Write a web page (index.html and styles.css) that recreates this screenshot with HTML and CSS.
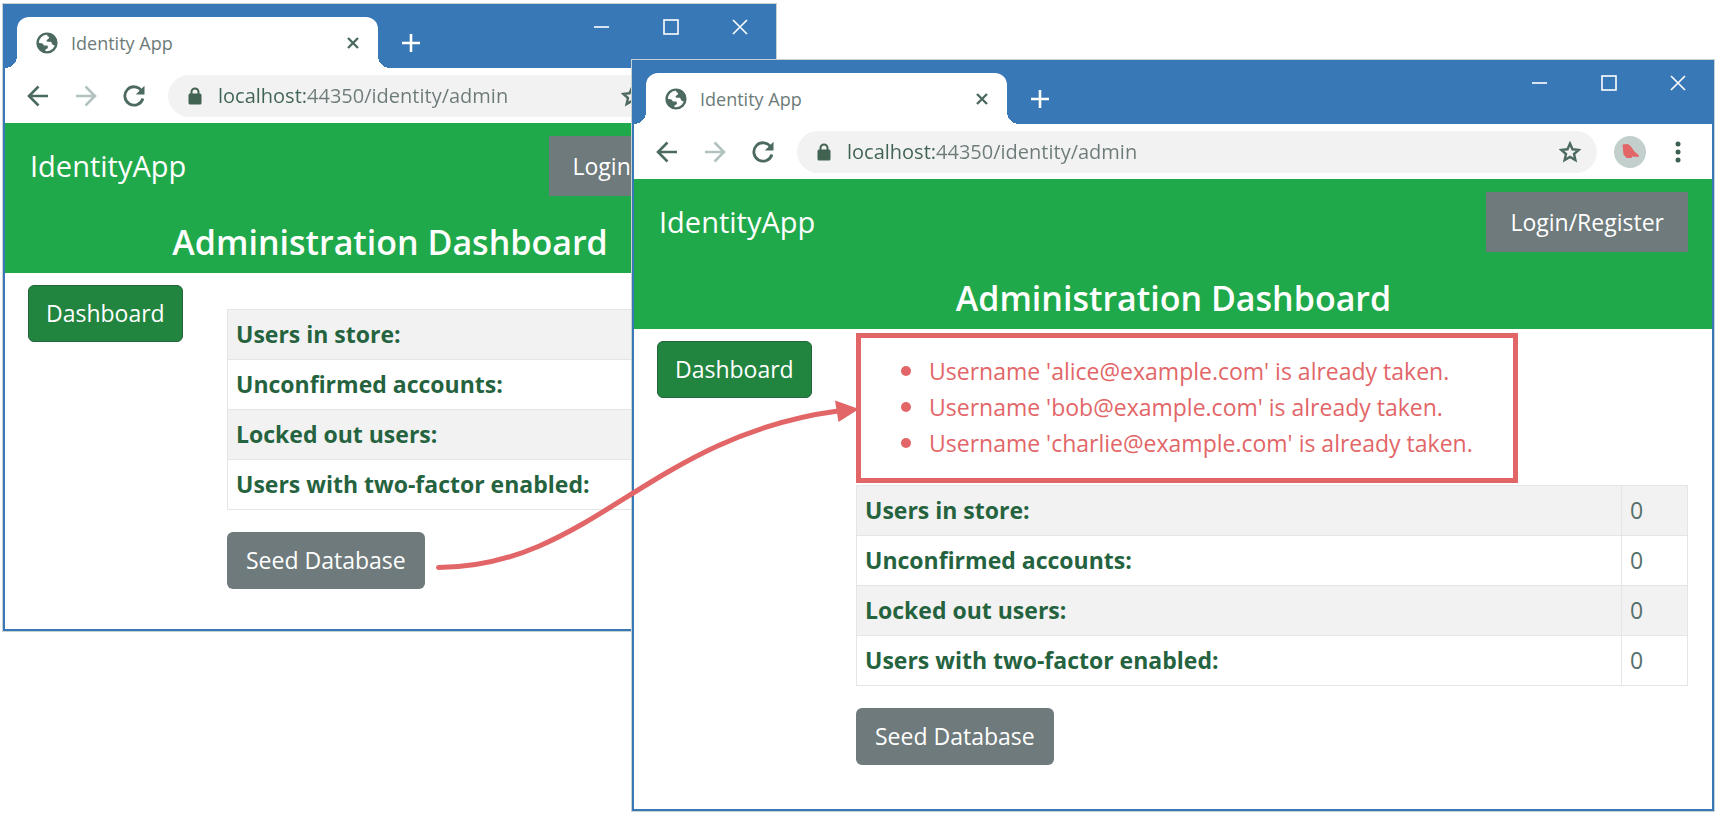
FILE: index.html
```html
<!DOCTYPE html>
<html lang="en">
<head>
<meta charset="utf-8">
<title>Identity App</title>
<link rel="stylesheet" href="styles.css">
</head>
<body>
<svg class="sprite" aria-hidden="true">
  <symbol id="globe" viewBox="0 0 22 22">
    <circle cx="11" cy="11" r="9.4" fill="none" stroke="currentColor" stroke-width="2.4"/>
    <path d="M1 10.5 L6.5 11.5 L8 13.5 L11.5 13.5 L12 16 L9.5 17.5 L9 20.5 C4.5 20 1 16 1 10.5Z" fill="currentColor"/>
    <path d="M12.5 1 C11 3 10.5 4 13 5 C14 6.5 11 7 10.5 9 C12 10.5 14.5 9 15.500 10.500 C16 13 18.500 14 20.500 13 C22 7 18.500 1.500 12.500 1Z" fill="currentColor"/>
  </symbol>
  <symbol id="tab-close" viewBox="0 0 12 12"><path d="M1 1 L11 11 M11 1 L1 11" stroke="currentColor" stroke-width="2.4"/></symbol>
  <symbol id="plus" viewBox="0 0 18 18"><path d="M9 0 V18 M0 9 H18" stroke="currentColor" stroke-width="2.6"/></symbol>
  <symbol id="min" viewBox="0 0 16 16"><path d="M0 8 H15" stroke="currentColor" stroke-width="1.6"/></symbol>
  <symbol id="max" viewBox="0 0 16 16"><rect x="1" y="1" width="14" height="14" fill="none" stroke="currentColor" stroke-width="1.6"/></symbol>
  <symbol id="close" viewBox="0 0 16 16"><path d="M1 1 L15 15 M15 1 L1 15" stroke="currentColor" stroke-width="1.6"/></symbol>
  <symbol id="back" viewBox="0 0 22 22"><path d="M21 11 H2 M11.500 1.500 L2 11 L11.500 20.500" fill="none" stroke="currentColor" stroke-width="2.6"/></symbol>
  <symbol id="forward" viewBox="0 0 22 22"><path d="M1 11 H20 M10.500 1.500 L20 11 L10.500 20.500" fill="none" stroke="currentColor" stroke-width="2.6"/></symbol>
  <symbol id="reload" viewBox="0 0 22 22">
    <path d="M18.800 6 A9.200 9.200 0 1 0 19.900 13.500" fill="none" stroke="currentColor" stroke-width="2.8"/>
    <path d="M21.500 .8 V9.500 H12.800Z" fill="currentColor"/>
  </symbol>
  <symbol id="lock" viewBox="0 0 14 18">
    <path d="M3.500 8 V5 A3.500 3.500 0 0 1 10.500 5 V8" fill="none" stroke="currentColor" stroke-width="2"/>
    <rect x=".5" y="6.500" width="13" height="11" rx="1.500" fill="currentColor"/>
  </symbol>
  <symbol id="star" viewBox="0 0 22 22"><path d="M11 2.600 L13.500 8.300 L19.700 8.900 L15 13 L16.400 19.100 L11 15.900 L5.600 19.100 L7 13 L2.300 8.900 L8.500 8.300Z" fill="none" stroke="currentColor" stroke-width="2.400"/></symbol>
  <symbol id="avatar" viewBox="0 0 32 32">
    <circle cx="16" cy="16" r="16" fill="#c3cfcd"/>
    <path d="M8.500 8.500 L14 8 L17 10.500 L20 15 L25 19.500 L24.500 21 L18.500 20.500 L17.500 22 L12.500 22 L9.500 18.500Z" fill="#e26668"/>
  </symbol>
  <symbol id="dots" viewBox="0 0 6 22"><circle cx="3" cy="3" r="2.500"/><circle cx="3" cy="11" r="2.500"/><circle cx="3" cy="19" r="2.500"/></symbol>
</svg>

<section class="window window-before">
  <header class="titlebar">
    <div class="tab">
      <svg class="i22"><use href="#globe"/></svg>
      <span class="tab-title">Identity App</span>
      <button class="icon-btn" aria-label="Close tab"><svg class="i12"><use href="#tab-close"/></svg></button>
    </div>
    <button class="icon-btn new-tab" aria-label="New tab"><svg class="i18"><use href="#plus"/></svg></button>
    <div class="controls">
      <button class="icon-btn" aria-label="Minimize"><svg class="i16"><use href="#min"/></svg></button>
      <button class="icon-btn" aria-label="Maximize"><svg class="i16"><use href="#max"/></svg></button>
      <button class="icon-btn" aria-label="Close"><svg class="i16"><use href="#close"/></svg></button>
    </div>
  </header>
  <div class="toolbar">
    <div class="nav">
      <button class="icon-btn" aria-label="Back"><svg class="i22"><use href="#back"/></svg></button>
      <button class="icon-btn faint" aria-label="Forward"><svg class="i22"><use href="#forward"/></svg></button>
      <button class="icon-btn" aria-label="Reload"><svg class="i22"><use href="#reload"/></svg></button>
    </div>
    <div class="omnibox">
      <svg class="lock"><use href="#lock"/></svg>
      <input class="url" type="text" aria-label="Address" value="localhost:44350/identity/admin">
      <button class="icon-btn" aria-label="Bookmark"><svg class="i22"><use href="#star"/></svg></button>
    </div>
    <button class="icon-btn" aria-label="Profile"><svg class="i32"><use href="#avatar"/></svg></button>
    <button class="icon-btn menu" aria-label="Menu"><svg class="dots"><use href="#dots"/></svg></button>
  </div>
  <div class="banner">
    <div class="banner-row">
      <a class="brand" href="#">IdentityApp</a>
      <a class="btn btn-login" href="#">Login/Register</a>
    </div>
    <h1 class="heading">Administration Dashboard</h1>
  </div>
  <div class="content">
    <nav class="sidebar"><a class="btn btn-nav" href="#">Dashboard</a></nav>
    <main class="main main-spaced">
      <table class="stats">
        <tr><th scope="row">Users in store:</th><td>0</td></tr>
        <tr><th scope="row">Unconfirmed accounts:</th><td>0</td></tr>
        <tr><th scope="row">Locked out users:</th><td>0</td></tr>
        <tr><th scope="row">Users with two-factor enabled:</th><td>0</td></tr>
      </table>
      <button class="btn btn-seed">Seed Database</button>
    </main>
  </div>
</section>

<section class="window window-after">
  <header class="titlebar">
    <div class="tab">
      <svg class="i22"><use href="#globe"/></svg>
      <span class="tab-title">Identity App</span>
      <button class="icon-btn" aria-label="Close tab"><svg class="i12"><use href="#tab-close"/></svg></button>
    </div>
    <button class="icon-btn new-tab" aria-label="New tab"><svg class="i18"><use href="#plus"/></svg></button>
    <div class="controls">
      <button class="icon-btn" aria-label="Minimize"><svg class="i16"><use href="#min"/></svg></button>
      <button class="icon-btn" aria-label="Maximize"><svg class="i16"><use href="#max"/></svg></button>
      <button class="icon-btn" aria-label="Close"><svg class="i16"><use href="#close"/></svg></button>
    </div>
  </header>
  <div class="toolbar">
    <div class="nav">
      <button class="icon-btn" aria-label="Back"><svg class="i22"><use href="#back"/></svg></button>
      <button class="icon-btn faint" aria-label="Forward"><svg class="i22"><use href="#forward"/></svg></button>
      <button class="icon-btn" aria-label="Reload"><svg class="i22"><use href="#reload"/></svg></button>
    </div>
    <div class="omnibox">
      <svg class="lock"><use href="#lock"/></svg>
      <input class="url" type="text" aria-label="Address" value="localhost:44350/identity/admin">
      <button class="icon-btn" aria-label="Bookmark"><svg class="i22"><use href="#star"/></svg></button>
    </div>
    <button class="icon-btn" aria-label="Profile"><svg class="i32"><use href="#avatar"/></svg></button>
    <button class="icon-btn menu" aria-label="Menu"><svg class="dots"><use href="#dots"/></svg></button>
  </div>
  <div class="banner">
    <div class="banner-row">
      <a class="brand" href="#">IdentityApp</a>
      <a class="btn btn-login" href="#">Login/Register</a>
    </div>
    <h1 class="heading">Administration Dashboard</h1>
  </div>
  <div class="content">
    <nav class="sidebar"><a class="btn btn-nav" href="#">Dashboard</a></nav>
    <main class="main">
      <ul class="errors">
        <li>Username 'alice@example.com' is already taken.</li>
        <li>Username 'bob@example.com' is already taken.</li>
        <li>Username 'charlie@example.com' is already taken.</li>
      </ul>
      <table class="stats">
        <tr><th scope="row">Users in store:</th><td>0</td></tr>
        <tr><th scope="row">Unconfirmed accounts:</th><td>0</td></tr>
        <tr><th scope="row">Locked out users:</th><td>0</td></tr>
        <tr><th scope="row">Users with two-factor enabled:</th><td>0</td></tr>
      </table>
      <button class="btn btn-seed">Seed Database</button>
    </main>
  </div>
</section>

<svg class="arrow" viewBox="430 390 440 190" aria-hidden="true">
  <path d="M438.500 567.500 C590 567 650 436 838 411" fill="none" stroke="#e26668" stroke-width="5" stroke-linecap="round"/>
  <path d="M835 400.500 L859 409 L838.500 422Z" fill="#e26668"/>
</svg>
</body>
</html>
```
FILE: styles.css
```css
* { box-sizing: border-box; }

body {
  margin: 0;
  min-height: 100vh;
  background: #fff;
  color: #56706b;
  font: 23px/32px "Open Sans", "Noto Sans", sans-serif;
}

svg { display: block; flex: none; }
.sprite { position: absolute; width: 0; height: 0; }
.i12 { width: 12px; height: 12px; }
.i16 { width: 16px; height: 16px; }
.i18 { width: 18px; height: 18px; }
.i22 { width: 22px; height: 22px; }
.i32 { width: 32px; height: 32px; }
.lock { width: 14px; height: 18px; color: #426352; }
.dots { width: 6px; height: 22px; fill: #3d6150; }

.icon-btn {
  display: flex;
  padding: 0;
  border: 0;
  background: none;
  color: inherit;
}

/* Browser windows */
.window {
  position: absolute;
  border: 2px solid #3878b6;
  outline: 1px solid #c9d2d2;
  background: #fff;
}
.window-before { left: 3px; top: 4px; width: 45%; }
.window-after { left: 632px; top: 60px; right: 4px; }

.titlebar {
  display: flex;
  align-items: flex-start;
  height: 62px;
  padding: 11px 26px 0 12px;
  background: #3878b6;
  color: #fff;
}
.tab {
  position: relative;
  display: flex;
  align-items: center;
  gap: 13px;
  width: 361px;
  height: 51px;
  padding: 0 19px 0 19px;
  border-radius: 12px 12px 0 0;
  background: #fff;
  color: #4d6a60;
}
.tab::before,
.tab::after {
  content: "";
  position: absolute;
  bottom: 0;
  width: 12px;
  height: 12px;
}
.tab::before { right: 100%; background: radial-gradient(circle at 0 0, transparent 12px, #fff 12px); }
.tab::after { left: 100%; background: radial-gradient(circle at 100% 0, transparent 12px, #fff 12px); }
.tab-title {
  flex: 1;
  color: #6c7b79;
  font-size: 18px;
}
.new-tab { margin: 17px 0 0 24px; }
.controls {
  display: flex;
  gap: 53px;
  margin: 2px 0 0 auto;
}

.toolbar {
  display: flex;
  align-items: center;
  height: 55px;
  padding: 0 31px 0 22px;
  color: #4d6a60;
}
.nav {
  display: flex;
  gap: 26px;
  margin-right: 23px;
}
.faint { color: #b2c2c0; }
.omnibox {
  display: flex;
  flex: 1;
  align-items: center;
  height: 42px;
  margin-right: 17px;
  padding: 0 16px 0 20px;
  border-radius: 21px;
  background: #f2f2f2;
}
.url {
  flex: 1;
  min-width: 0;
  margin-left: 16px;
  padding: 0;
  border: 0;
  background: linear-gradient(90deg, #3f6352 90px, #6c7b79 90px);
  background-clip: text;
  color: transparent;
  font: 20px/32px "Open Sans", "Noto Sans", sans-serif;
}
.menu { margin-left: 29px; }

/* Application page */
.banner {
  padding: 13px 24px 7px 25px;
  background: #20a94a;
  color: #fff;
}
.banner-row {
  display: flex;
  align-items: center;
  justify-content: space-between;
}
.brand {
  color: #fff;
  font-size: 29px;
  text-decoration: none;
}
.heading {
  margin: 22px 0 0;
  font-size: 34px;
  font-weight: 600;
  line-height: 48px;
  text-align: center;
}

.btn {
  display: block;
  padding: 12px 19px;
  border: 0;
  border-radius: 6px;
  color: #fff;
  font: inherit;
  line-height: 33px;
  text-decoration: none;
}
.btn-login { padding: 14px 24px; border-radius: 0; background: #6e7a7b; line-height: 32px; }
.btn-nav { background: #21843f; border: 1px solid #25633f; padding: 11px 17px; }
.btn-seed { margin-top: 22px; background: #6e7a7b; }

.content {
  display: flex;
  align-items: flex-start;
  padding: 0 24px 44px 23px;
}
.window-before .content { padding-bottom: 40px; }
.sidebar { flex: none; width: 199px; padding-top: 12px; }
.sidebar .btn { width: fit-content; }
.main { flex: 1; padding-top: 4px; }
.main-spaced { padding-top: 36px; }

.errors {
  width: fit-content;
  margin: 0 0 2px;
  padding: 15px 40px 17px 40px;
  border: 5px solid #e26668;
  color: #e26668;
  line-height: 36px;
  list-style: none;
}
.errors li {
  display: flex;
  align-items: center;
  gap: 18px;
}
.errors li::before {
  content: "";
  width: 10px;
  height: 10px;
  border-radius: 50%;
  background: #e26668;
}

.stats {
  width: 100%;
  border-collapse: collapse;
  line-height: 33px;
}
.stats th,
.stats td {
  padding: 8px;
  border: 1px solid #e3e6e6;
  text-align: left;
}
.stats tr:nth-child(odd) { background: #f2f2f2; }
.stats th { color: #25633f; font-weight: 700; }
.stats td { width: 66px; }

.arrow {
  position: absolute;
  left: 430px;
  top: 390px;
  width: 440px;
  height: 190px;
  pointer-events: none;
}
```
